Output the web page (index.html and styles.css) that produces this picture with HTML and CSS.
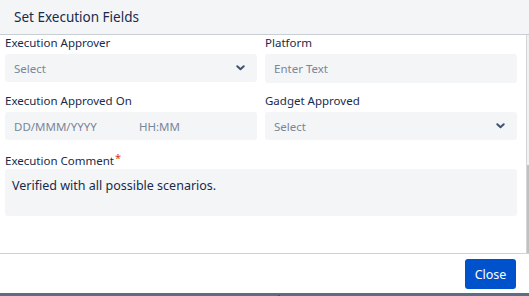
FILE: index.html
```html
<!DOCTYPE html>
<html lang="en">
<head>
    <meta charset="UTF-8">
    <meta name="viewport" content="width=device-width, initial-scale=1.0">
    <title>Set Execution Fields</title>
    <link rel="stylesheet" href="styles.css">
</head>
<body>
    <div class="modal">
        <div class="modal-header">
            <h2>Set Execution Fields</h2>
        </div>

        <div class="modal-body">
            <div class="form-area">
                <div class="form-grid">
                    <div class="field">
                        <label>Execution Approver</label>
                        <div class="control select">
                            <span class="placeholder">Select</span>
                            <svg class="chevron" width="9" height="6" viewBox="0 0 9 6">
                                <path d="M1.3 1.3 L4.5 4.3 L7.7 1.3" fill="none" stroke="#42526e" stroke-width="2" stroke-linecap="round" stroke-linejoin="round"/>
                            </svg>
                        </div>
                    </div>
                    <div class="field">
                        <label>Platform</label>
                        <div class="control text-input">
                            <span class="placeholder">Enter Text</span>
                        </div>
                    </div>
                    <div class="field">
                        <label>Execution Approved On</label>
                        <div class="control datetime">
                            <span class="placeholder date">DD/MMM/YYYY</span>
                            <span class="placeholder">HH:MM</span>
                        </div>
                    </div>
                    <div class="field">
                        <label>Gadget Approved</label>
                        <div class="control select">
                            <span class="placeholder">Select</span>
                            <svg class="chevron" width="9" height="6" viewBox="0 0 9 6">
                                <path d="M1.3 1.3 L4.5 4.3 L7.7 1.3" fill="none" stroke="#42526e" stroke-width="2" stroke-linecap="round" stroke-linejoin="round"/>
                            </svg>
                        </div>
                    </div>
                    <div class="field full">
                        <label>Execution Comment<span class="required">*</span></label>
                        <div class="control textarea">Verified with all possible scenarios.</div>
                    </div>
                </div>
            </div>
            <div class="scroll-rail">
                <div class="scroll-thumb"></div>
            </div>
        </div>

        <div class="modal-footer">
            <button class="btn-primary">Close</button>
        </div>
    </div>
    <div class="page-peek">
        <span class="peek-id">11-15-19</span>
        <span class="peek-text">Set Done on Mar Mode</span>
    </div>
</body>
</html>
```

FILE: styles.css
```css
* {
    margin: 0;
    padding: 0;
    box-sizing: border-box;
}

body {
    font-family: 'Noto Sans', 'Open Sans', sans-serif;
    color: #172b4d;
    background: #fff;
    width: 529px;
    height: 296px;
    overflow: hidden;
}

.modal {
    height: 293px;
    display: flex;
    flex-direction: column;
    background: #fff;
}

.modal-header {
    height: 35px;
    background: #f4f5f7;
    border-bottom: 1px solid #c9cdd4;
    padding: 8px 14px 0;
}

.modal-header h2 {
    font-size: 13.5px;
    font-weight: 400;
    line-height: 18px;
    color: #172b4d;
}

.modal-body {
    height: 219px;
    display: flex;
    border-bottom: 1px solid #cfd2d6;
}

.form-area {
    flex: 1;
    padding: 0 9px 0 5px;
}

.form-grid {
    display: grid;
    grid-template-columns: 252px 252px;
    column-gap: 8px;
    row-gap: 10px;
}

.field.full {
    grid-column: 1 / 3;
}

.field label {
    display: block;
    font-size: 11.5px;
    line-height: 16px;
    height: 16px;
    margin-bottom: 3px;
    color: #172b4d;
}

.required {
    color: #de350b;
    font-size: 11px;
    vertical-align: 3px;
    margin-left: 1px;
}

.control {
    background: #f4f5f7;
    border-radius: 3px;
    height: 28px;
    display: flex;
    align-items: center;
    padding: 0 10px 0 9px;
    font-size: 11.5px;
}

.text-input {
    height: 29px;
    padding-left: 9px;
}

.placeholder {
    color: #7a869a;
}

.select {
    justify-content: space-between;
    padding-right: 12px;
}

.chevron {
    display: block;
}

.datetime .date {
    width: 125px;
}

.textarea {
    height: 47px;
    align-items: flex-start;
    padding: 9px 7px;
    font-size: 12.5px;
    line-height: 16px;
    color: #172b4d;
}

.scroll-rail {
    width: 3px;
    border-left: 1px solid #d4d6da;
    background: #f1f1f1;
    display: flex;
    flex-direction: column;
    justify-content: flex-end;
}

.scroll-thumb {
    height: 88px;
    background: #c1c1c1;
}

.modal-footer {
    flex: 1;
    display: flex;
    justify-content: flex-end;
    align-items: flex-start;
    padding: 5px 13px 0 0;
}

.btn-primary {
    width: 51px;
    height: 30px;
    background: #0052cc;
    color: #fff;
    border: none;
    border-radius: 3px;
    font-family: 'Noto Sans', 'Open Sans', sans-serif;
    font-size: 12.5px;
}

.page-peek {
    height: 3px;
    overflow: hidden;
    background: #5e6c84;
    display: flex;
    gap: 58px;
    padding-left: 36px;
    font-size: 13px;
    line-height: 13px;
    color: #1d3a70;
}

.page-peek span {
    margin-top: 1px;
}
```
